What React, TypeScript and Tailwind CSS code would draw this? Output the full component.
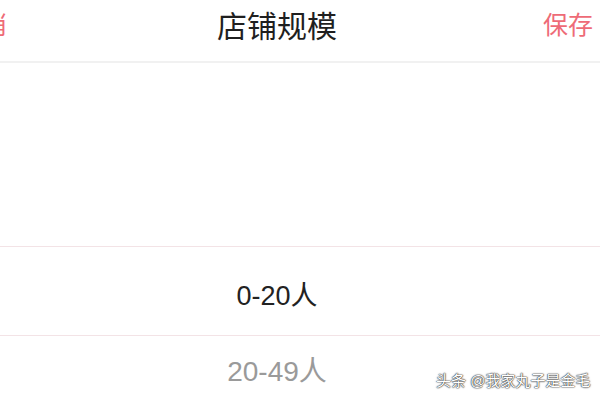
import React from 'react';

const cjk = { fontFamily: '"Liberation Sans", "Noto Sans CJK SC", sans-serif' };

function Header() {
  return (
    <div className="h-[63px] border-b-2 border-[#f1f1f1] ml-[-46px] w-[646px] flex items-center justify-between pl-[3px] pr-[7px]">
      <button className="text-[25px] leading-none text-[#ee6b77] pb-[10px]">取消</button>
      <div className="text-[30px] leading-none text-[#1f1f1f] pb-[8px] pl-[4px]">店铺规模</div>
      <button className="text-[25px] leading-none text-[#ee6b77] pb-[10px]">保存</button>
    </div>
  );
}

const options = ['0-20人', '20-49人'];

export default function App() {
  return (
    <div className="w-[600px] h-[400px] bg-white overflow-hidden relative" style={cjk}>
      <Header />
      <div className="ml-[-46px] w-[646px]">
        <div className="h-[183px]" />
        <div className="h-[90px] border-y border-[#f3e3e6] flex items-center justify-center pt-[10px]">
          <span className="text-[27px] leading-none text-[#222]">{options[0]}</span>
        </div>
        <div className="h-[60px] flex justify-center pt-[22px]">
          <span className="text-[28px] leading-none text-[#9a9a9a]">{options[1]}</span>
        </div>
      </div>
      <div className="absolute left-[436px] top-[373px] text-[15px] leading-none text-white [text-shadow:0_0_1px_#333,0_0_1px_#333,0_0_2px_#555]">
        头条 @我家丸子是金毛
      </div>
    </div>
  );
}
